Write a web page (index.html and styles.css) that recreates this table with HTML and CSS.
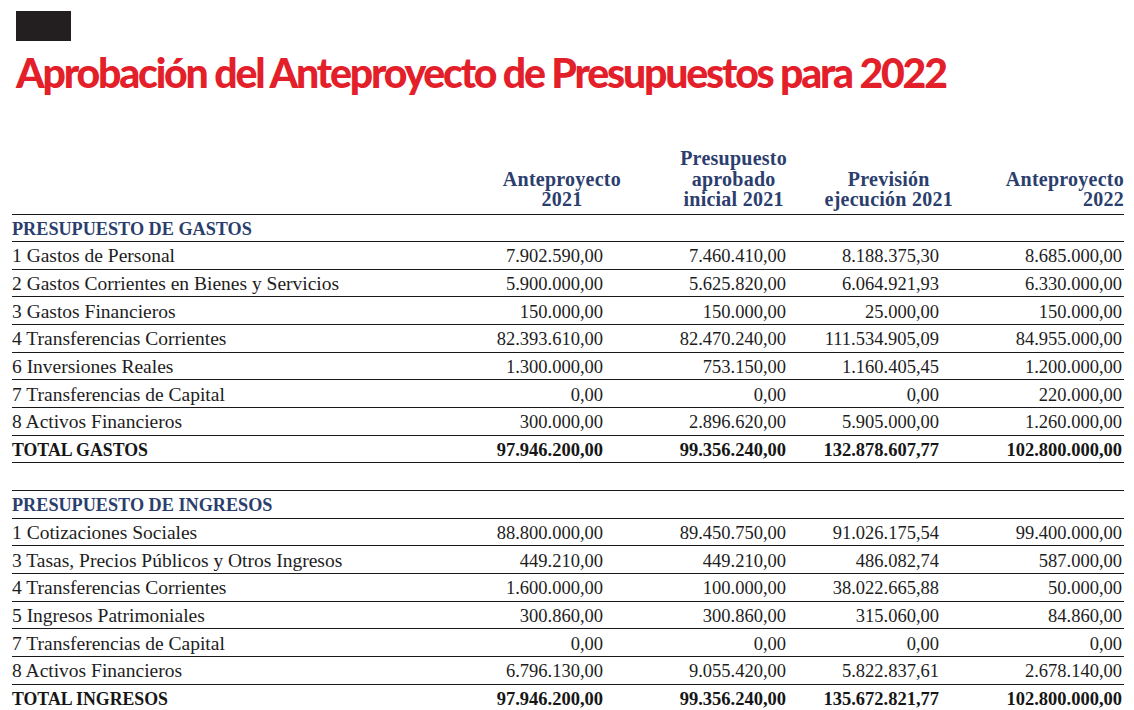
FILE: index.html
```html
<!DOCTYPE html>
<html lang="es">
<head>
<meta charset="utf-8">
<title>Aprobación del Anteproyecto de Presupuestos para 2022</title>
<link rel="stylesheet" href="styles.css">
</head>
<body>
<div class="page">
  <div class="tag"></div>
  <h1 class="title">Aprobación del Anteproyecto de Presupuestos para 2022</h1>
  <div class="table">
    <div class="row head">
      <div class="cell"></div>
      <div class="cell hnum"><span>Anteproyecto<br>2021</span></div>
      <div class="cell hnum"><span>Presupuesto<br>aprobado<br>inicial 2021</span></div>
      <div class="cell hnum"><span>Previsión<br>ejecución 2021</span></div>
      <div class="cell hnum right"><span>Anteproyecto<br>2022</span></div>
    </div>

    <div class="row section"><div class="cell">PRESUPUESTO DE GASTOS</div></div>
    <div class="row"><div class="cell label">1 Gastos de Personal</div><div class="cell n1">7.902.590,00</div><div class="cell n2">7.460.410,00</div><div class="cell n3">8.188.375,30</div><div class="cell n4">8.685.000,00</div></div>
    <div class="row"><div class="cell label">2 Gastos Corrientes en Bienes y Servicios</div><div class="cell n1">5.900.000,00</div><div class="cell n2">5.625.820,00</div><div class="cell n3">6.064.921,93</div><div class="cell n4">6.330.000,00</div></div>
    <div class="row"><div class="cell label">3 Gastos Financieros</div><div class="cell n1">150.000,00</div><div class="cell n2">150.000,00</div><div class="cell n3">25.000,00</div><div class="cell n4">150.000,00</div></div>
    <div class="row"><div class="cell label">4 Transferencias Corrientes</div><div class="cell n1">82.393.610,00</div><div class="cell n2">82.470.240,00</div><div class="cell n3">111.534.905,09</div><div class="cell n4">84.955.000,00</div></div>
    <div class="row"><div class="cell label">6 Inversiones Reales</div><div class="cell n1">1.300.000,00</div><div class="cell n2">753.150,00</div><div class="cell n3">1.160.405,45</div><div class="cell n4">1.200.000,00</div></div>
    <div class="row"><div class="cell label">7 Transferencias de Capital</div><div class="cell n1">0,00</div><div class="cell n2">0,00</div><div class="cell n3">0,00</div><div class="cell n4">220.000,00</div></div>
    <div class="row"><div class="cell label">8 Activos Financieros</div><div class="cell n1">300.000,00</div><div class="cell n2">2.896.620,00</div><div class="cell n3">5.905.000,00</div><div class="cell n4">1.260.000,00</div></div>
    <div class="row total"><div class="cell">TOTAL GASTOS</div><div class="cell n1">97.946.200,00</div><div class="cell n2">99.356.240,00</div><div class="cell n3">132.878.607,77</div><div class="cell n4">102.800.000,00</div></div>

    <div class="row blank"></div>

    <div class="row section"><div class="cell">PRESUPUESTO DE INGRESOS</div></div>
    <div class="row"><div class="cell label">1 Cotizaciones Sociales</div><div class="cell n1">88.800.000,00</div><div class="cell n2">89.450.750,00</div><div class="cell n3">91.026.175,54</div><div class="cell n4">99.400.000,00</div></div>
    <div class="row"><div class="cell label">3 Tasas, Precios Públicos y Otros Ingresos</div><div class="cell n1">449.210,00</div><div class="cell n2">449.210,00</div><div class="cell n3">486.082,74</div><div class="cell n4">587.000,00</div></div>
    <div class="row"><div class="cell label">4 Transferencias Corrientes</div><div class="cell n1">1.600.000,00</div><div class="cell n2">100.000,00</div><div class="cell n3">38.022.665,88</div><div class="cell n4">50.000,00</div></div>
    <div class="row"><div class="cell label">5 Ingresos Patrimoniales</div><div class="cell n1">300.860,00</div><div class="cell n2">300.860,00</div><div class="cell n3">315.060,00</div><div class="cell n4">84.860,00</div></div>
    <div class="row"><div class="cell label">7 Transferencias de Capital</div><div class="cell n1">0,00</div><div class="cell n2">0,00</div><div class="cell n3">0,00</div><div class="cell n4">0,00</div></div>
    <div class="row"><div class="cell label">8 Activos Financieros</div><div class="cell n1">6.796.130,00</div><div class="cell n2">9.055.420,00</div><div class="cell n3">5.822.837,61</div><div class="cell n4">2.678.140,00</div></div>
    <div class="row total last"><div class="cell">TOTAL INGRESOS</div><div class="cell n1">97.946.200,00</div><div class="cell n2">99.356.240,00</div><div class="cell n3">135.672.821,77</div><div class="cell n4">102.800.000,00</div></div>
  </div>
</div>
</body>
</html>
```

FILE: styles.css
```css
html, body {
  margin: 0;
  padding: 0;
  background: #ffffff;
}

.page {
  width: 1134px;
  height: 710px;
  overflow: hidden;
  padding: 11px 0 0 0;
  box-sizing: border-box;
}

.tag {
  width: 55px;
  height: 30px;
  margin-left: 16px;
  background: #231f20;
}

.title {
  margin: 8px 0 0 16px;
  font-family: Lato, "Noto Sans", sans-serif;
  font-weight: 900;
  font-size: 41px;
  line-height: 48px;
  letter-spacing: -2.2px;
  color: #e3202a;
  white-space: nowrap;
}

.table {
  margin: 49px 0 0 12px;
  width: 1112px;
  font-family: "Liberation Serif", "Times New Roman", serif;
  color: #1d1d1d;
}

.row {
  display: grid;
  grid-template-columns: 428px 181px 166px 166px 171px;
  height: 27.67px;
  box-sizing: border-box;
  border-bottom: 1px solid #1a1a1a;
  align-items: center;
  font-size: 18.5px;
  line-height: 22px;
}

.row.last {
  border-bottom: none;
}

.cell {
  white-space: nowrap;
  padding-top: 2px;
}

.cell.label {
  font-size: 19.5px;
}

.n1, .n2, .n3, .n4 {
  text-align: right;
}
.n1 { padding-right: 18px; }
.n2 { padding-right: 1px; }
.n3 { padding-right: 14px; }
.n4 { padding-right: 2px; }

.row.head {
  height: auto;
  align-items: end;
  padding-bottom: 4px;
  font-weight: bold;
  font-size: 20px;
  letter-spacing: 0.25px;
  line-height: 20.5px;
  color: #2b3e6d;
}

.hnum {
  display: flex;
  justify-content: flex-end;
  text-align: center;
}
.hnum.right {
  text-align: right;
}

.row.section {
  font-weight: bold;
  color: #2b3e6d;
  font-size: 18.2px;
}

.row.total {
  font-weight: bold;
  color: #161616;
}

.row.total .cell:first-child {
  font-size: 17.8px;
}
```
